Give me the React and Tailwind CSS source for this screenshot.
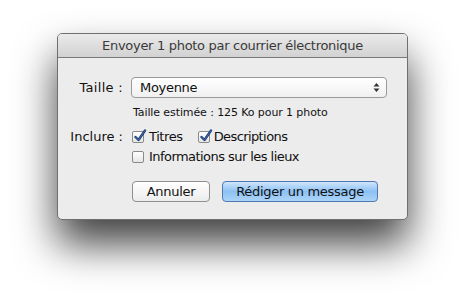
import React from "react";

function Check({ checked }) {
  return (
    <span className="relative inline-block w-[12px] h-[12px] rounded-[2px] border border-[#8a8a8a] bg-gradient-to-b from-[#ffffff] to-[#e6e6e6] shrink-0">
      {checked && (
        <svg className="absolute left-[0px] top-[-3px]" width="14" height="14" viewBox="0 0 14 14">
          <path d="M2.5 8 L5.5 11 L12 1.5" fill="none" stroke="#1f3d73" strokeWidth="2.4" strokeLinecap="round" strokeLinejoin="round" />
          <path d="M2.5 8 L5.5 11 L12 1.5" fill="none" stroke="#4a78c0" strokeWidth="0.8" strokeLinecap="round" strokeLinejoin="round" />
        </svg>
      )}
    </span>
  );
}

export default function App() {
  const font = { fontFamily: '"Lucida Grande", "DejaVu Sans", sans-serif' };
  return (
    <div className="w-[464px] h-[298px] bg-white pl-[57px] pt-[33px] text-[#111]" style={font}>
      <div className="w-[351px] h-[187px] rounded-[5px] border border-[#6f6f6f] bg-[#ececec] shadow-[0_24px_42px_rgba(0,0,0,0.75)] flex flex-col overflow-hidden">
        <div className="h-[24px] shrink-0 border-b border-[#7a7a7a] bg-gradient-to-b from-[#eaeaea] to-[#d2d2d2] flex items-center justify-center text-[13px] text-[#3a3a3a] tracking-[-0.3px]">
          Envoyer 1 photo par courrier électronique
        </div>
        <div className="flex flex-col pt-[19px]">
          <div className="flex items-center h-[21px]">
            <div className="w-[65px] text-right text-[13px] tracking-[0.3px]">Taille :</div>
            <div className="ml-[8px] w-[256px] h-[21px] rounded-[4px] border border-[#9a9a9a] bg-gradient-to-b from-[#ffffff] to-[#f0f0f0] flex items-center pl-[8px] pr-[6px] text-[13px] tracking-[-0.3px]">
              <span className="flex-1">Moyenne</span>
              <svg width="7" height="11" viewBox="0 0 7 11">
                <path d="M3.5 1 L6.5 4.5 L0.5 4.5 Z" fill="#333" />
                <path d="M3.5 10 L6.5 6.5 L0.5 6.5 Z" fill="#333" />
              </svg>
            </div>
          </div>
          <div className="ml-[75px] mt-[8px] h-[14px] text-[11px] leading-[14px] tracking-[-0.1px]">
            Taille estimée : 125 Ko pour 1 photo
          </div>
          <div className="flex items-center mt-[10px] h-[14px]">
            <div className="w-[65px] text-right text-[13px]">Inclure :</div>
            <div className="ml-[9px] flex items-center gap-[5px]">
              <Check checked />
              <span className="text-[13px] tracking-[-0.4px]">Titres</span>
            </div>
            <div className="ml-[15px] flex items-center gap-[4px]">
              <Check checked />
              <span className="text-[13px] tracking-[-0.6px]">Descriptions</span>
            </div>
          </div>
          <div className="flex items-center ml-[74px] mt-[6px] h-[14px] gap-[5px]">
            <Check />
            <span className="text-[13px] tracking-[-0.55px]">Informations sur les lieux</span>
          </div>
          <div className="flex items-center ml-[74px] mt-[17px] gap-[12px]">
            <div className="w-[78px] h-[21px] rounded-[4px] border border-[#8f8f8f] bg-gradient-to-b from-[#ffffff] to-[#ececec] flex items-center justify-center text-[13px] tracking-[-0.3px]">
              Annuler
            </div>
            <div className="w-[156px] h-[21px] rounded-[4px] border border-[#4f78b0] bg-gradient-to-b from-[#d0e6fc] via-[#8cc1f3] to-[#acd5f8] flex items-center justify-center text-[13px] tracking-[-0.3px]">
              Rédiger un message
            </div>
          </div>
        </div>
      </div>
    </div>
  );
}
